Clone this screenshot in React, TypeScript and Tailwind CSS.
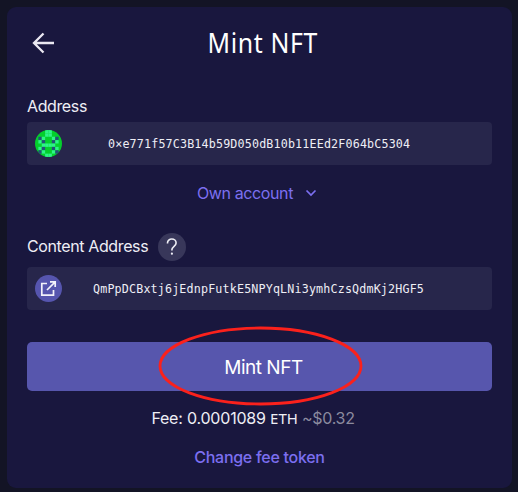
const cells = [
  '...ll...',
  '...ll...',
  '.dl..ld.',
  '.ld..dl.',
  '..llll..',
  '.ld..dl.',
  '.dl..ld.',
  '...ll...',
];

function Identicon() {
  return (
    <span className="h-[27px] w-[27px] overflow-hidden rounded-full bg-[#04cf2c]">
      <svg viewBox="0 0 8 8" className="block h-full w-full">
        {cells.flatMap((row, y) =>
          row.split('').map((c, x) =>
            c === '.' ? null : (
              <rect key={`${x}-${y}`} x={x} y={y} width="1" height="1" fill={c === 'l' ? '#2ef487' : '#24507a'} />
            ),
          ),
        )}
      </svg>
    </span>
  );
}

export default function App() {
  return (
    <div className="h-[492px] w-[518px] overflow-hidden bg-[#131425] pl-[7px] pt-[7px] font-['Inter',sans-serif] text-base tracking-[-0.38px] text-[#eeeef5]">
      <main className="flex h-[481px] w-[505px] flex-col rounded-[9px] bg-[#19173e] px-5">
        <header className="grid h-[71px] grid-cols-[32px_1fr_32px] items-center">
          <svg className="h-6 w-8" viewBox="0 0 32 24" fill="none" stroke="#eae8f1" strokeWidth="2.3">
            <path d="M27 12H7.5M16.5 2.5L7 12l9.5 9.5" />
          </svg>
          <h1 className="scale-x-[0.92] whitespace-nowrap pl-[7px] text-center font-['Noto_Sans',sans-serif] text-[27px] leading-none tracking-[0.7px] text-white">Mint NFT</h1>
        </header>

        <div className="mt-[18px] flex h-[20px] items-center">Address</div>
        <div className="mt-[6px] flex h-[43px] items-center rounded bg-[#27264b] pl-2">
          <Identicon />
          <span className="ml-[46px] whitespace-nowrap pt-[3px] font-['DejaVu_Sans_Mono',monospace] text-[11.7px] tracking-[0.16px]">0×e771f57C3B14b59D050dB10b11EEd2F064bC5304</span>
        </div>

        <button className="mt-[17px] flex h-[22px] items-center justify-center gap-3 pr-[5px] text-[#7c6ff0]">
          <span>Own account</span>
          <svg width="12" height="8" viewBox="0 0 12 8" fill="none" stroke="currentColor" strokeWidth="1.7">
            <path d="M1.5 1.5L6 6l4.5-4.5" />
          </svg>
        </button>

        <div className="mt-[29px] flex h-7 items-center gap-[10px]">
          <span className="pb-[2px]">Content Address</span>
          <span className="flex h-7 w-7 items-center justify-center rounded-full bg-[#38375a]">
            <svg width="12" height="18" viewBox="0 0 12 18" fill="none" stroke="#eeeef5" strokeWidth="1.6">
              <path d="M1.5 5.5V5a4.3 4 0 0 1 8.6 0c0 3.2-4.2 3.4-4.2 6.8v.7" />
              <circle cx="5.9" cy="15.7" r="1.1" fill="#eeeef5" stroke="none" />
            </svg>
          </span>
        </div>
        <div className="mt-[6px] flex h-[43px] items-center rounded bg-[#27264b] pl-2">
          <span className="flex h-[27px] w-[27px] items-center justify-center rounded-full bg-[#5655ae]">
            <svg width="17" height="17" viewBox="0 0 17 17" fill="none" stroke="#f2f1fa" strokeWidth="1.7">
              <path d="M7 3.5H1.8v11.7h11.7V10M10 1.8h5.2V7M15.2 1.8L7 10" />
            </svg>
          </span>
          <span className="ml-[31px] whitespace-nowrap pt-[3px] font-['DejaVu_Sans_Mono',monospace] text-[11.7px] tracking-[0.16px]">QmPpDCBxtj6jEdnpFutkE5NPYqLNi3ymhCzsQdmKj2HGF5</span>
        </div>

        <button className="relative mt-8 flex h-[49px] items-center justify-center rounded-[5px] bg-[#5756ad] pl-2 pt-[3px] text-[19px] tracking-[-0.5px] text-white">
          Mint NFT
          <svg className="absolute -top-4 left-[131px]" width="206" height="82" viewBox="0 0 206 82" fill="none">
            <ellipse cx="102.5" cy="40" rx="100.5" ry="38" stroke="#fb211c" strokeWidth="2.8" />
          </svg>
        </button>

        <div className="mt-[17px] flex h-[20px] items-center justify-center whitespace-pre pr-[13px]">
          <span className="tracking-[-0.2px]">Fee: 0.0001089 </span>
          <span className="font-['Noto_Sans',sans-serif] text-[15px] tracking-normal">ETH</span>
          <span className="tracking-[-0.3px] text-[#8b8a9e]"> ~$0.32</span>
        </div>
        <button className="mt-[19px] h-[20px] font-medium leading-5 tracking-[-0.28px] text-[#7c6ff0]">Change fee token</button>
      </main>
    </div>
  );
}
